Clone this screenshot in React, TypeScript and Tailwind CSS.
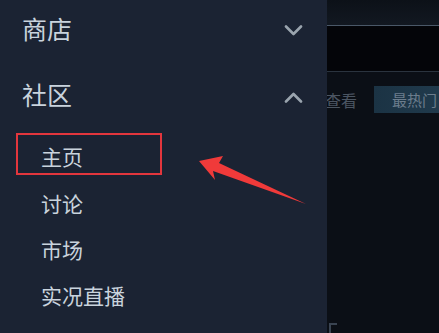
const font = { fontFamily: '"Noto Sans CJK SC", "Noto Sans", sans-serif' };

const subItems = ['讨论', '市场', '实况直播'];

function Chevron({ up }: { up?: boolean }) {
  return (
    <svg width="19" height="12" viewBox="0 0 19 12" className="translate-y-[3px]">
      <polyline
        points={up ? '2,10.5 9.5,3 17,10.5' : '2,1.5 9.5,9 17,1.5'}
        fill="none"
        stroke="#9aa4ae"
        strokeWidth="2.6"
        strokeLinecap="round"
        strokeLinejoin="round"
      />
    </svg>
  );
}

export default function App() {
  return (
    <div className="relative flex w-[439px] h-[333px] overflow-hidden bg-[#0b0f16]" style={font}>
      {/* Sidebar */}
      <div className="relative z-10 w-[327px] h-full shrink-0 bg-[#1b2333] flex flex-col">
        <div className="h-[56px] flex items-center justify-between pl-[22px] pr-[24px]">
          <span className="text-[25px] leading-none text-[#c9d3dd]">商店</span>
          <Chevron />
        </div>
        <div className="h-[56px] mt-[10px] flex items-center justify-between pl-[22px] pr-[24px]">
          <span className="text-[25px] leading-none text-[#c9d3dd]">社区</span>
          <Chevron up />
        </div>

        {/* Highlighted item */}
        <div className="mt-[11px] ml-[16px] w-[146px] h-[42px] border-2 border-[#e3363d] flex items-center pl-[23px] pt-[5px]">
          <span className="text-[21px] leading-none text-[#c9d3dd]">主页</span>
        </div>

        <div className="mt-[5px] flex flex-col">
          {subItems.map((item) => (
            <div key={item} className="h-[46px] flex items-center pl-[41px]">
              <span className="text-[21px] leading-none text-[#c9d3dd]">{item}</span>
            </div>
          ))}
        </div>
      </div>

      {/* Background page */}
      <div className="flex-1 flex flex-col">
        <div className="h-[25px] bg-gradient-to-b from-[#0c1118] to-[#121821]" />
        <div className="h-[1px] bg-[#4a5868]" />
        <div className="h-[45px] bg-[#040509]" />
        <div className="h-[1px] bg-[#2a333e]" />
        <div className="flex-1 bg-[#0b0f16] flex flex-col">
          <div className="flex items-center mt-[14px] h-[27px]">
            <span className="-ml-[2px] text-[16px] leading-none text-[#4b5562]">查看</span>
            <div className="ml-[17px] flex-1 h-[27px] bg-gradient-to-r from-[#1b3344] to-[#203a4c] flex items-center pl-[18px]">
              <span className="text-[15px] leading-none text-[#6c7d8d] whitespace-nowrap">最热门</span>
            </div>
          </div>
          <div className="flex-1" />
          <div className="ml-[2px] w-[8px] h-[10px] border-l-2 border-t-2 border-[#3a4452]" />
        </div>
      </div>

      {/* Annotation arrow */}
      <svg className="absolute left-0 top-0 z-20 pointer-events-none" width="439" height="333">
        <polygon
          points="199,161 223,156 219,163 306,204 213,171 215,180"
          fill="#f03a3a"
        />
      </svg>
    </div>
  );
}
